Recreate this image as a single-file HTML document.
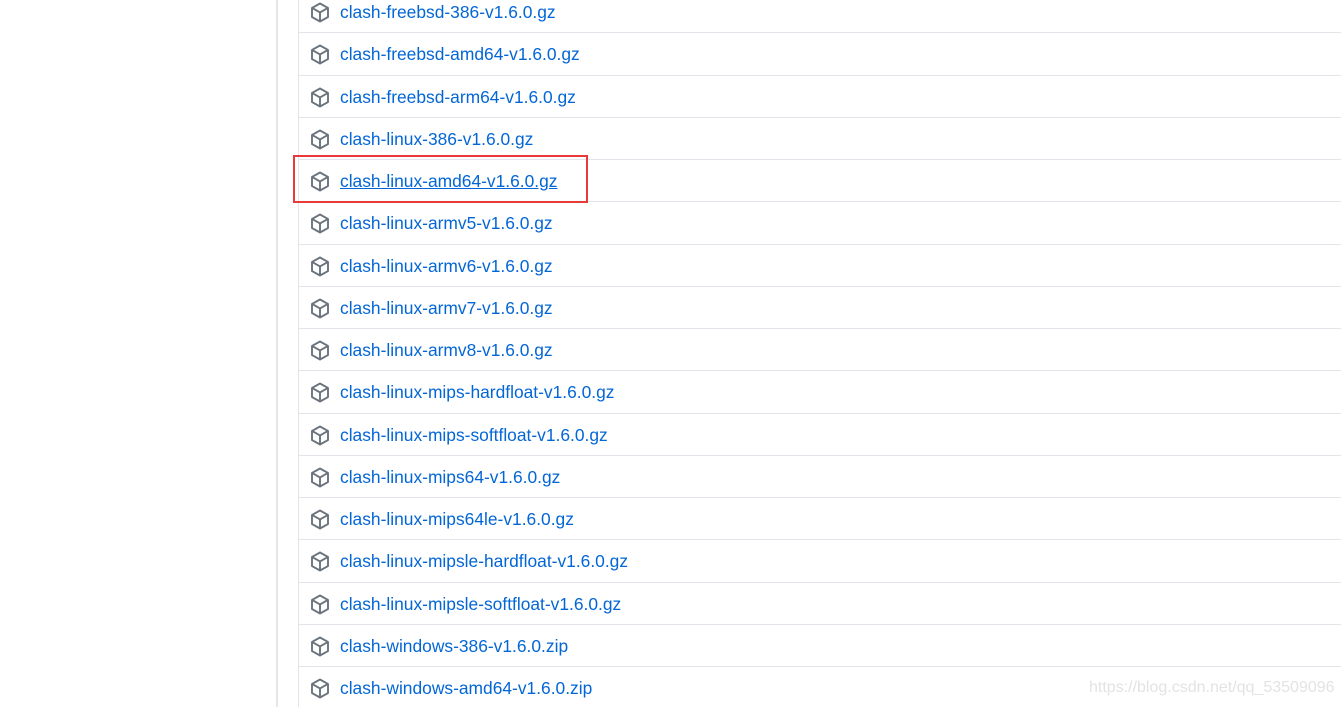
<!DOCTYPE html>
<html><head><style>
body{margin:0;width:1341px;height:707px;background:#fff;position:relative;overflow:hidden;font-family:"Liberation Sans",sans-serif}
.vl{position:absolute;left:276px;top:0;width:2px;height:707px;background:#e6e6e6}
.rl{position:absolute;left:298px;top:0;width:1px;height:707px;background:#e1e4e8}
.sep{position:absolute;left:298px;right:0;height:1px;background:#e1e4e8}
.row{position:absolute;left:310px;height:24px;display:flex;align-items:center}
.row svg{width:20px;height:21px;margin-right:10px}
.row a{color:#0366d6;font-size:17.4px;text-decoration:none}
.box{position:absolute;left:293px;top:155px;width:291px;height:44px;border:2px solid #e83a3a}
.wm{position:absolute;left:1089px;top:679px;color:#e3e3e3;font-size:16px}
</style></head><body>
<div class="vl"></div><div class="rl"></div>
<div id="c"></div>
<div class="box"></div>
<div class="wm">https://blog.csdn.net/qq_53509096</div>
<script>
var n=["clash-freebsd-386-v1.6.0.gz","clash-freebsd-amd64-v1.6.0.gz","clash-freebsd-arm64-v1.6.0.gz","clash-linux-386-v1.6.0.gz","clash-linux-amd64-v1.6.0.gz","clash-linux-armv5-v1.6.0.gz","clash-linux-armv6-v1.6.0.gz","clash-linux-armv7-v1.6.0.gz","clash-linux-armv8-v1.6.0.gz","clash-linux-mips-hardfloat-v1.6.0.gz","clash-linux-mips-softfloat-v1.6.0.gz","clash-linux-mips64-v1.6.0.gz","clash-linux-mips64le-v1.6.0.gz","clash-linux-mipsle-hardfloat-v1.6.0.gz","clash-linux-mipsle-softfloat-v1.6.0.gz","clash-windows-386-v1.6.0.zip","clash-windows-amd64-v1.6.0.zip"];
var ic='<svg viewBox="0 0 20 21"><path d="M10 1.5 L18 5.9 V15.1 L10 19.5 L2 15.1 V5.9 Z M2.3 6.1 L10 10.4 L17.7 6.1 M10 10.4 V19.3" fill="none" stroke="#6a737d" stroke-width="1.9" stroke-linejoin="round"/></svg>';
var h="";
for(var i=0;i<n.length;i++){
 var c=12+i*42.25;
 if(i>0)h+='<div class="sep" style="top:'+Math.round(c-22)+'px"></div>';
 h+='<div class="row" style="top:'+Math.round(c-12)+'px">'+ic+'<a'+(i==4?' style="text-decoration:underline"':'')+'>'+n[i]+'</a></div>';
}
document.getElementById("c").innerHTML=h;
</script>
</body></html>
